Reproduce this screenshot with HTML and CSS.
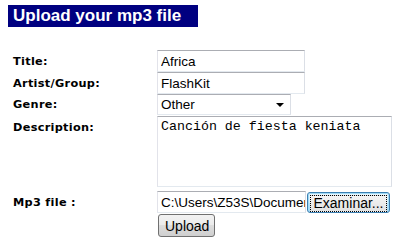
FILE: index.html
```html
<!DOCTYPE html>
<html lang="en">
<head>
  <meta charset="UTF-8">
  <title>Upload your mp3 file</title>
  <link rel="stylesheet" href="styles.css">
</head>
<body>

  <div class="title-bar">Upload your mp3 file</div>

  <form class="upload-form">
    <div class="form-row">
      <label class="label">Title:</label>
      <input class="field" type="text" value="Africa">
    </div>
    <div class="form-row">
      <label class="label">Artist/Group:</label>
      <input class="field" type="text" value="FlashKit">
    </div>
    <div class="form-row">
      <label class="label">Genre:</label>
      <div class="select-wrap">
        <select class="genre">
          <option>Other</option>
        </select>
        <span class="arrow"></span>
      </div>
    </div>
    <div class="form-row top">
      <label class="label">Description:</label>
      <textarea class="desc">Canción de fiesta keniata</textarea>
    </div>
    <div class="form-row file-row">
      <label class="label">Mp3 file :</label>
      <div class="file-pick">
        <input class="file-path" type="text" value="C:\Users\Z53S\Documents\africa.mp3" readonly>
        <button type="button" class="btn browse"><span class="focus">Examinar...</span></button>
      </div>
    </div>
    <div class="form-row">
      <span class="label"></span>
      <button type="button" class="btn upload">Upload</button>
    </div>
  </form>

</body>
</html>
```

FILE: styles.css
```css
body {
  margin: 0;
  padding: 5px 8px;
  background: #fff;
  font-family: 'Liberation Sans', Arial, sans-serif;
}

.title-bar {
  width: 185px;
  height: 22px;
  line-height: 22px;
  padding-left: 5px;
  background-color: #000080;
  color: #fff;
  font-size: 17px;
  font-weight: bold;
}

.upload-form {
  margin-top: 23px;
  padding-left: 5px;
}

.form-row {
  display: flex;
  align-items: center;
}

.form-row.top {
  align-items: flex-start;
  margin-top: 1px;
}

.label {
  flex: 0 0 144px;
  font-family: 'DejaVu Sans', Verdana, sans-serif;
  font-size: 11.3px;
  font-weight: bold;
  letter-spacing: 0.3px;
  color: #000;
}

.form-row.top .label {
  padding-top: 5px;
}

.field,
.file-path {
  box-sizing: border-box;
  width: 148px;
  height: 22px;
  margin: 0;
  padding: 1px 3px;
  border: 1px solid;
  border-color: #abadb3 #dbdfe6 #e3e9ef #e2e3ea;
  font-family: 'Liberation Sans', Arial, sans-serif;
  font-size: 13.5px;
  color: #000;
  outline: none;
}

.select-wrap {
  position: relative;
  width: 134px;
  height: 21px;
}

.genre {
  appearance: none;
  box-sizing: border-box;
  width: 134px;
  height: 21px;
  margin: 0;
  padding: 0 3px;
  border: 1px solid;
  border-color: #abadb3 #dbdfe6 #e3e9ef #e2e3ea;
  border-radius: 0;
  background: #fff;
  font-family: 'Liberation Sans', Arial, sans-serif;
  font-size: 13.5px;
  color: #000;
}

.arrow {
  position: absolute;
  right: 7px;
  top: 9px;
  width: 0;
  height: 0;
  border-left: 4px solid transparent;
  border-right: 4px solid transparent;
  border-top: 4px solid #000;
}

.desc {
  box-sizing: border-box;
  display: block;
  width: 241px;
  height: 71px;
  margin: 0;
  padding: 2px 3px;
  border: 1px solid;
  border-color: #abadb3 #dbdfe6 #e3e9ef #e2e3ea;
  font-family: 'Liberation Mono', 'Courier New', monospace;
  font-size: 13.3px;
  color: #000;
  resize: none;
  outline: none;
}

.file-row {
  margin-top: 4px;
}

.file-pick {
  display: flex;
  align-items: center;
  gap: 1px;
}

.file-path {
  width: 149px;
  padding-right: 0;
}

.btn {
  box-sizing: border-box;
  margin: 0;
  border: 1px solid #707070;
  border-radius: 3px;
  background: linear-gradient(#f2f2f2 0%, #ebebeb 50%, #dddddd 50%, #cfcfcf 100%);
  font-family: 'Liberation Sans', Arial, sans-serif;
  font-size: 14px;
  color: #000;
  cursor: pointer;
}

.browse {
  width: 83px;
  height: 21px;
  padding: 2px;
  border-color: #3c7fb1;
  background: linear-gradient(#eaf6fd 0%, #d9f0fc 50%, #bee6fd 50%, #a7d9f5 100%);
  box-shadow: inset 0 0 0 1px #a0dbf7;
  line-height: 13px;
}

.browse .focus {
  display: block;
  height: 15px;
  line-height: 15px;
  border: 1px dotted #000;
  background: linear-gradient(#f4f4f4, #e2e2e2);
}

.upload {
  width: 57px;
  height: 23px;
  margin-top: 1px;
  margin-left: 1px;
}
```
